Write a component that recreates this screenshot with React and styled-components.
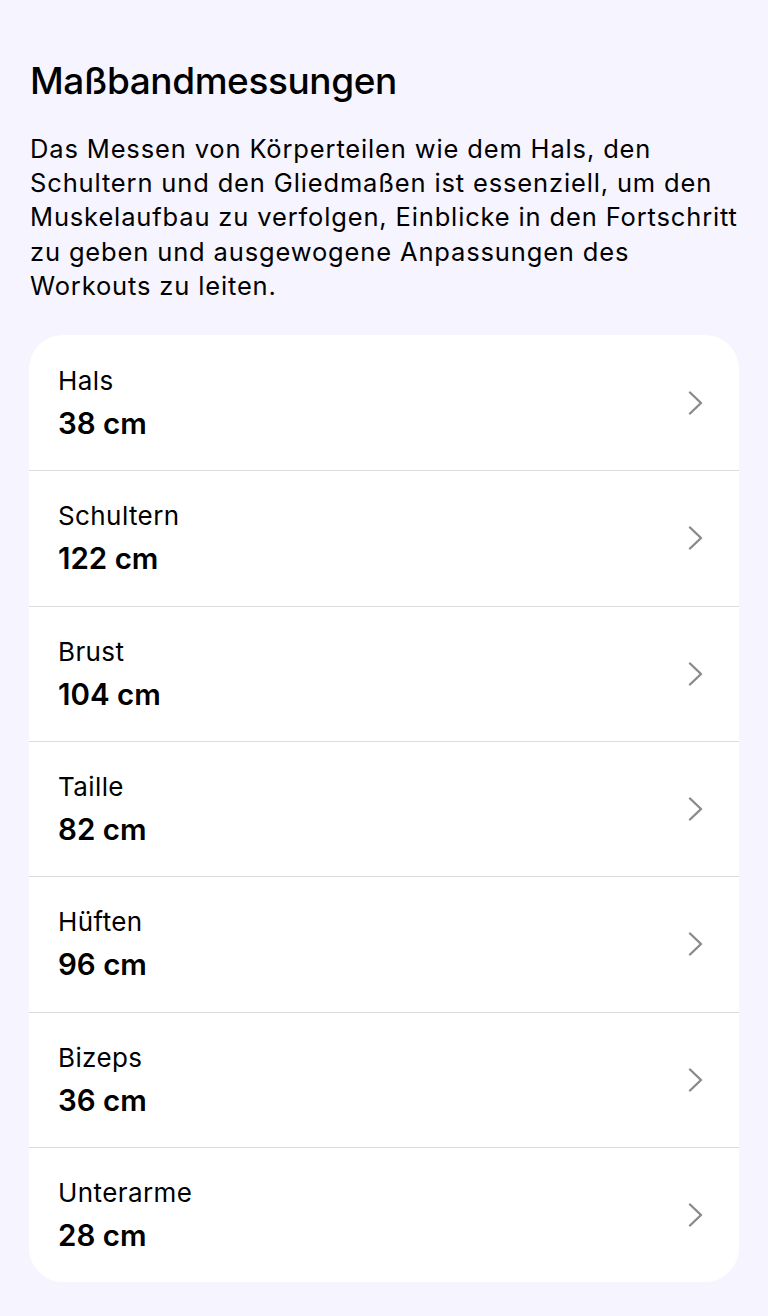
import styled, { createGlobalStyle } from 'styled-components';

const GlobalStyle = createGlobalStyle`
    html, body {
        margin: 0;
        padding: 0;
        background: #F6F4FE;
    }

    body {
        font-family: Inter, "Noto Sans", sans-serif;
        color: #000;
        -webkit-font-smoothing: antialiased;
    }
`;

const measurements = [
    { label: 'Hals', value: '38 cm' },
    { label: 'Schultern', value: '122 cm' },
    { label: 'Brust', value: '104 cm' },
    { label: 'Taille', value: '82 cm' },
    { label: 'Hüften', value: '96 cm' },
    { label: 'Bizeps', value: '36 cm' },
    { label: 'Unterarme', value: '28 cm' },
];

const Page = styled.main`
    min-height: 1316px;
    box-sizing: border-box;
    padding: 58px 29px 32px 29px;
`;

const Title = styled.h1`
    margin: 0 0 28px 1px;
    font-size: 37px;
    line-height: 46px;
    font-weight: 500;
    letter-spacing: -0.4px;
`;

const Intro = styled.p`
    margin: 0 0 32px 1px;
    font-size: 25.5px;
    line-height: 34.2px;
    font-weight: 400;
    letter-spacing: 0.85px;
`;

const Card = styled.ul`
    list-style: none;
    margin: 0;
    padding: 0;
    background: #fff;
    border-radius: 34px;
    overflow: hidden;
`;

const Row = styled.li`
    height: 135.3px;
    box-sizing: border-box;
    display: flex;
    align-items: center;
    justify-content: space-between;
    padding: 0 36px 0 29px;
    border-top: ${props => (props.$first ? 'none' : '1px solid #DCDCDE')};
`;

const Texts = styled.div`
    display: flex;
    flex-direction: column;
    gap: 8px;
`;

const Label = styled.span`
    font-size: 26px;
    line-height: 32px;
    font-weight: 400;
    letter-spacing: 0.4px;
`;

const Value = styled.span`
    font-size: 29.5px;
    line-height: 36px;
    font-weight: 600;
    letter-spacing: 0;
`;

const Chevron = () => (
    <svg width="15" height="24" viewBox="0 0 15 24" fill="none">
        <path
            d="M2 1.5 L13 12 L2 22.5"
            stroke="#8A8A8E"
            strokeWidth="2.4"
            strokeLinecap="round"
            strokeLinejoin="round"
        />
    </svg>
);

const App = () => {
    return (
        <>
            <GlobalStyle />
            <Page>
                <Title>Maßbandmessungen</Title>
                <Intro>
                    Das Messen von Körperteilen wie dem Hals, den Schultern und den Gliedmaßen ist
                    essenziell, um den Muskelaufbau zu verfolgen, Einblicke in den Fortschritt zu
                    geben und ausgewogene Anpassungen des Workouts zu leiten.
                </Intro>
                <Card>
                    {measurements.map((item, i) => (
                        <Row key={item.label} $first={i === 0}>
                            <Texts>
                                <Label>{item.label}</Label>
                                <Value>{item.value}</Value>
                            </Texts>
                            <Chevron />
                        </Row>
                    ))}
                </Card>
            </Page>
        </>
    );
};

export default App;
